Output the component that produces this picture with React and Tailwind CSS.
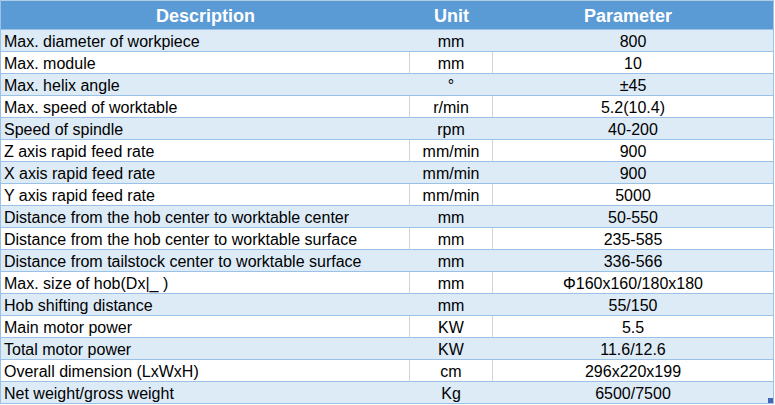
import React from "react";

const rows = [
  ["Max. diameter of workpiece", "mm", "800"],
  ["Max. module", "mm", "10"],
  ["Max. helix angle", "°", "±45"],
  ["Max. speed of worktable", "r/min", "5.2(10.4)"],
  ["Speed of spindle", "rpm", "40-200"],
  ["Z axis rapid feed rate", "mm/min", "900"],
  ["X axis rapid feed rate", "mm/min", "900"],
  ["Y axis rapid feed rate", "mm/min", "5000"],
  ["Distance from the hob center to worktable center", "mm", "50-550"],
  ["Distance from the hob center to worktable surface", "mm", "235-585"],
  ["Distance from tailstock center to worktable surface", "mm", "336-566"],
  ["Max. size of hob(Dx|_ )", "mm", "Φ160x160/180x180"],
  ["Hob shifting distance", "mm", "55/150"],
  ["Main motor power", "KW", "5.5"],
  ["Total motor power", "KW", "11.6/12.6"],
  ["Overall dimension (LxWxH)", "cm", "296x220x199"],
  ["Net weight/gross weight", "Kg", "6500/7500"],
];

const Row = ({ cells, band }) => {
  const bg = band ? "bg-[#ddebf7]" : "bg-white";
  const divider = band ? "border-[#ddebf7]" : "border-[#d4d4d4]";
  return (
    <div className={`flex h-[22px] border-b border-[#9bc2e6] ${bg}`}>
      <div className={`w-[409px] pl-[3px] pt-[2px] flex items-center border-r ${divider}`}>{cells[0]}</div>
      <div className={`w-[83px] pt-[2px] flex items-center justify-center border-r ${divider}`}>{cells[1]}</div>
      <div className="flex-1 pt-[2px] flex items-center justify-center">{cells[2]}</div>
    </div>
  );
};

export default function App() {
  return (
    <div className="w-[775px] h-[405px] bg-white relative" style={{ fontFamily: '"Liberation Sans", Arial, sans-serif' }}>
      <div className="w-[774px] border-l border-r border-[#9bc2e6] text-[16px] text-black leading-none">
        <div className="flex h-[30px] pt-[1px] bg-[#5b9bd5] border-t border-t-[#b4cde6] border-b border-b-[#9bc2e6] text-white font-bold text-[18px]">
          <div className="w-[409px] flex items-center justify-center">Description</div>
          <div className="w-[83px] flex items-center justify-center">Unit</div>
          <div className="flex-1 flex items-center justify-center pr-[10px]">Parameter</div>
        </div>
        {rows.map((r, i) => (
          <Row key={i} cells={r} band={i % 2 === 0} />
        ))}
      </div>
      <div className="absolute left-[768px] top-[398px] w-[5px] h-[5px] bg-[#4466b8]" />
    </div>
  );
}
